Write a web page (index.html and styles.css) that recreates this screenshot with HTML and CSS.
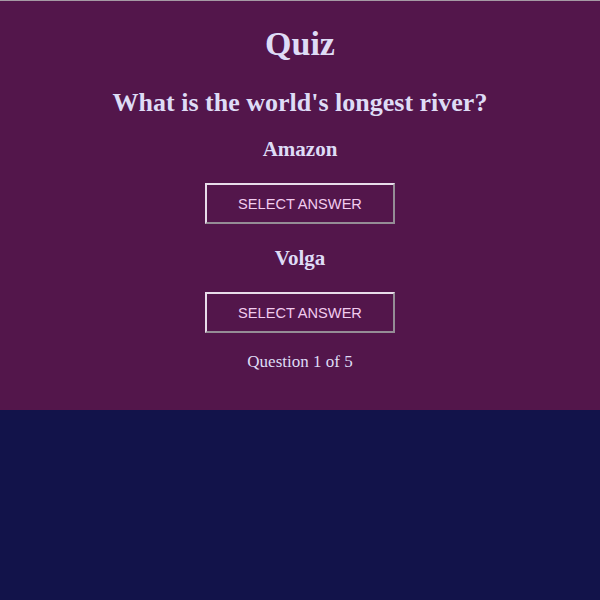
FILE: index.html
```html
<!DOCTYPE html>
<html lang="en">
<head>
<meta charset="utf-8">
<title>Quiz</title>
<link rel="stylesheet" href="styles.css">
</head>
<body>
<main class="quiz">
  <h1 class="quiz-title">Quiz</h1>
  <h2 class="question">What is the world's longest river?</h2>
  <div class="answer">
    <h3 class="answer-text">Amazon</h3>
    <button class="select-btn" type="button">SELECT ANSWER</button>
  </div>
  <div class="answer">
    <h3 class="answer-text">Volga</h3>
    <button class="select-btn" type="button">SELECT ANSWER</button>
  </div>
  <p class="progress">Question 1 of 5</p>
</main>
</body>
</html>
```
FILE: styles.css
```css
html, body {
  margin: 0;
  padding: 0;
  height: 100%;
}
body {
  background: #12134a;
  font-family: "Liberation Serif", "Times New Roman", serif;
  color: #dedcf6;
}
.quiz {
  box-sizing: border-box;
  height: 410px;
  background: #53164b;
  border-top: 1px solid #a59aa4;
  display: flex;
  flex-direction: column;
  align-items: center;
  text-align: center;
}
.quiz-title {
  margin: 23px 0 0;
  font-size: 34px;
  font-weight: bold;
  line-height: 39px;
}
.question {
  margin: 25px 0 0;
  font-size: 26px;
  font-weight: bold;
  line-height: 30px;
}
.answer {
  display: flex;
  flex-direction: column;
  align-items: center;
}
.answer + .answer {
  margin-top: 3px;
}
.answer-text {
  margin: 19px 0 0;
  font-size: 21px;
  font-weight: bold;
  line-height: 24px;
}
.select-btn {
  margin-top: 22px;
  width: 190px;
  height: 41px;
  background: transparent;
  border: 2px outset #e8dcea;
  color: #f2ccef;
  font-family: "Liberation Sans", Arial, sans-serif;
  font-size: 14.6px;
  cursor: pointer;
}
.progress {
  margin: 19px 0 0;
  font-size: 17px;
  line-height: 20px;
}
```
